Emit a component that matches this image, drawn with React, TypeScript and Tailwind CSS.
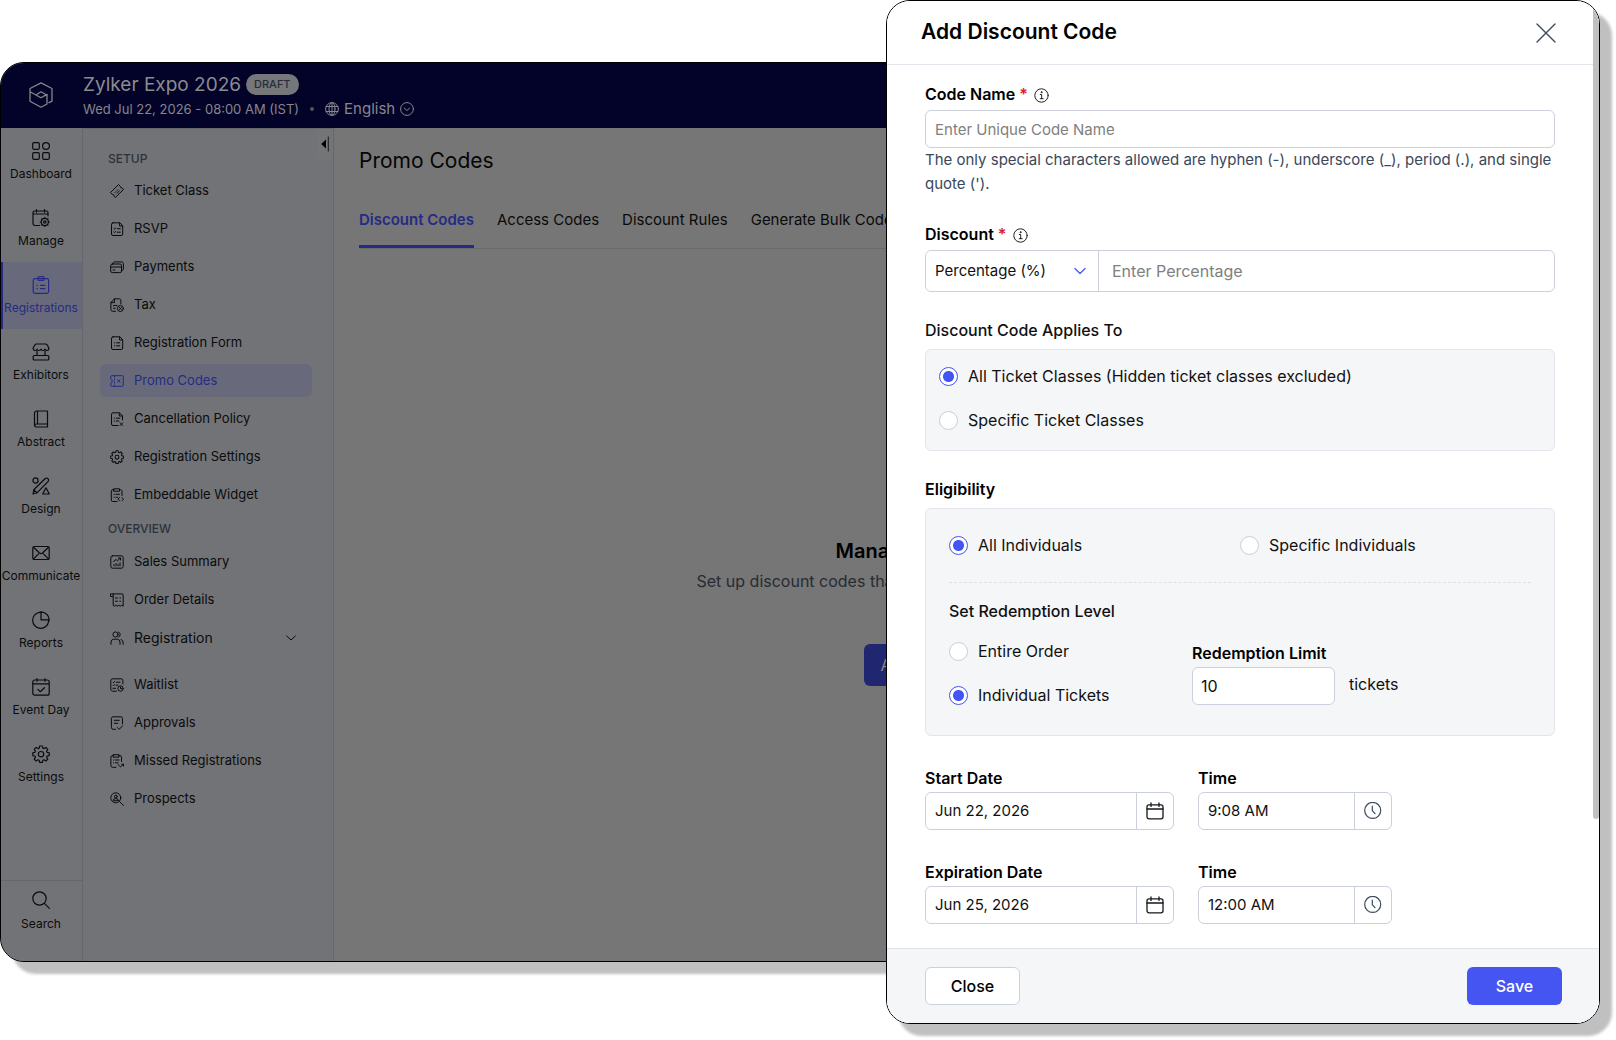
import React, { useState } from "react";

type IconProps = { className?: string; children: React.ReactNode; box?: number; width?: number };

function Svg({ className, children, box = 18, width = 1.2 }: IconProps) {
  return (
    <svg
      className={className}
      viewBox={`0 0 ${box} ${box}`}
      fill="none"
      stroke="currentColor"
      strokeWidth={width}
      strokeLinecap="round"
      strokeLinejoin="round"
      aria-hidden="true"
    >
      {children}
    </svg>
  );
}

const gear =
  "M7.6 1h2.8l.4 2.1 1.3.5 1.8-1.2 1.9 1.9-1.2 1.8.5 1.3 2.1.4v2.8l-2.1.4-.5 1.3 1.2 1.8-1.9 1.9-1.8-1.2-1.3.5-.4 2.1H7.6l-.4-2.1-1.3-.5-1.8 1.2-1.9-1.9 1.2-1.8-.5-1.3L.8 10.600V7.800l2.1-.4.5-1.3-1.200-1.8 1.9-1.900 1.8 1.2 1.300-.5z";

const railItems = [
  {
    label: "Dashboard",
    icon: (
      <>
        <rect x="0.7" y="0.7" width="6.6" height="6.6" rx="1.2" />
        <circle cx="14" cy="4" r="3.400" />
        <rect x="0.7" y="10.7" width="6.6" height="6.6" rx="1.2" />
        <rect x="10.7" y="10.7" width="6.6" height="6.6" rx="1.2" />
      </>
    ),
  },
  {
    label: "Manage",
    icon: (
      <>
        <path d="M7.500 16.500H3a2 2 0 0 1-2-2V3.500a1.500 1.500 0 0 1 1.500-1.500h12A1.500 1.500 0 0 1 16 3.500V7M1 5h15M4.500.7v2.500M12.500.7v2.500" />
        <circle cx="12.800" cy="13" r="3.600" />
        <circle cx="12.800" cy="13" r="1.200" />
        <path d="M12.800 8.400v1M12.800 16.600v1M8.200 13h1M16.400 13h1M9.600 9.800l.7.7M15.300 15.500l.7.7M9.600 16.200l.7-.7M15.300 10.500l.7-.7" />
      </>
    ),
  },
  {
    label: "Registrations",
    icon: (
      <>
        <rect x="1.200" y="2.600" width="15.400" height="14.700" rx="1.800" />
        <path d="M6 1.800Q6 .7 7 .7h4q1 0 1 1.100v1.600q0 1-1 1H7q-1 0-1-1z" />
        <path d="M8.500 9.300h4.500M8.500 12.700h4.500M5 9.300h.3M5 12.700h.3" />
      </>
    ),
  },
  {
    label: "Exhibitors",
    icon: (
      <>
        <path d="M4 1h10q1.500.5 3 4.500-.2 2-2 2t-2-1.300q-.3 1.300-2 1.300t-2-1.300q-.3 1.300-2 1.300t-2-1.300q-.3 1.300-2 1.300t-2-2Q2.500 1.500 4 1z" />
        <path d="M5 8v4M13 8v4" />
        <rect x="1.200" y="12.500" width="15.600" height="4.500" rx="1" />
      </>
    ),
  },
  {
    label: "Abstract",
    icon: (
      <>
        <path d="M4.500 1h11v13h-11a2 2 0 0 0-2 1.500V3a2 2 0 0 1 2-2zM5.500 1v13M2.500 15.500q.5 1.500 2 1.500h11v-3" />
      </>
    ),
  },
  {
    label: "Design",
    icon: (
      <>
        <circle cx="3.500" cy="3.500" r="2.600" />
        <path d="M1 17l.8-4.200L13.200 1.500q1.500-1 2.700.1t.3 2.700L5 15.800zM14 10.800l3.300 6.200h-6.600zM1.800 12.800l3.200 3" />
      </>
    ),
  },
  {
    label: "Communicate",
    icon: (
      <>
        <rect x="0.8" y="2.500" width="16.400" height="13" rx="1.600" />
        <path d="M1.500 3.300l6 5.700q1.500 1.200 3 0l6-5.700M1.500 14.800l5-5M16.500 14.800l-5-5" />
      </>
    ),
  },
  {
    label: "Reports",
    icon: (
      <>
        <path d="M7.600 1.400A8 8 0 1 0 16.600 10.400" />
        <path d="M9 .8v8h8.200Q16.700 1.800 9 .8z" />
        <path d="M7.600 1.400L9 1.200M16.600 10.400l.4-1.600" />
      </>
    ),
  },
  {
    label: "Event Day",
    icon: (
      <>
        <rect x="0.800" y="2" width="16.400" height="15.200" rx="2" />
        <path d="M1 5.800h16M5 .7v2.600M13 .7v2.600M6 11.500l2.200 2.200 4.300-4" />
      </>
    ),
  },
  {
    label: "Settings",
    icon: (
      <>
        <path d={gear} />
        <circle cx="9" cy="9.200" r="2.700" />
      </>
    ),
  },
];

const doc = "M3 .8h7l2.700 3v8.200a1.500 1.500 0 0 1-1.500 1.500H3A1.500 1.500 0 0 1 1.500 12V2.300A1.500 1.500 0 0 1 3 .8zM9.600 1v3h3";
const docLines = "M4.500 6.800h.3M6.700 6.800h3M4.500 9.800h.3M6.700 9.800h3";

const setupItems = [
  {
    label: "Ticket Class",
    icon: (
      <path d="M8.800.8l1.500 1.500q0 1.800 1.800 1.800l1.500 1.300L5.400 13.500 4 12.200q.2-2-1.800-1.900L.7 8.900zM5 8.500l.8-.8M7 6.500l.8-.8M7 9.300l2.500-2.500" />
    ),
  },
  {
    label: "RSVP",
    icon: (
      <>
        <path d={doc} />
        <path d="M3.800 6.500l.7.7 1-1.300M7.300 6.700h3M3.800 10l.7.7 1-1.300M7.300 10.200h3" />
      </>
    ),
  },
  {
    label: "Payments",
    icon: (
      <>
        <rect x=".7" y="4" width="10.800" height="8.600" rx="1.600" />
        <path d="M.8 7h10.600M3 10h1.800M2.800 3.800q.1-1.800 1.800-1.900h7.200q1.600.2 1.600 1.700v5.500q-.1 1.400-1.700 1.500" />
      </>
    ),
  },
  {
    label: "Tax",
    icon: (
      <>
        <path d="M5.500 13.300H2.600Q.9 13.200.9 11.600V4.500L4.400.8h5q1.500.1 1.500 1.500V6M1 4.600h3.400V1M3.500 7.500H7M3.500 10.200h1.700" />
        <circle cx="10.400" cy="10.500" r="3" />
        <path d="M9.400 9.500l2 2M11.400 9.500l-2 2" />
      </>
    ),
  },
  {
    label: "Registration Form",
    icon: (
      <>
        <path d={doc} />
        <path d={docLines} />
      </>
    ),
  },
  {
    label: "Promo Codes",
    icon: (
      <>
        <path d="M.8 2.500q0-.8.8-.8h10.800q.9.100.9.900v8.800q0 .9-.9.900H1.600q-.8 0-.8-.8V9.200q1.500-.5 1.500-2.200T.8 4.800zM4.500 2v1.200M4.500 5v1.200M4.500 8v1.200M4.500 11v1" />
        <path d="M7.500 5.700l2.600 2.600M10.100 5.700L7.500 8.300" />
      </>
    ),
  },
  {
    label: "Cancellation Policy",
    icon: (
      <>
        <path d="M8 13.500H3A1.500 1.500 0 0 1 1.500 12V2.300A1.500 1.500 0 0 1 3 .8h6.500l3 3V8M9.300 1v3h3M4.200 6.200h.3M6.300 6.200h3.500M4.200 9h.3M6.300 9h2.500M10.200 10.800l2.500 2.700M12.700 10.800l-2.500 2.700" />
      </>
    ),
  },
  {
    label: "Registration Settings",
    icon: (
      <>
        <g transform="scale(.78)">
          <path d={gear} strokeWidth="1.300" />
          <circle cx="9" cy="9.200" r="2.500" strokeWidth="1.300" />
        </g>
      </>
    ),
  },
  {
    label: "Embeddable Widget",
    icon: (
      <>
        <path d="M7 13.500H2.700Q1.300 13.400 1.300 12V3.200q.1-1.400 1.500-1.500H4M9.500 1.700h1q1.400.1 1.500 1.500V7.500M4 .8h5.500v2.400H4zM4 6.300h.3M6 6.300h3.500M4 9.300h.3M6 9.300h1.500M9.500 9.500L8 11.200l1.500 1.600M12 9.500l1.500 1.700L12 12.800" />
      </>
    ),
  },
];

const overviewTop = [
  {
    label: "Sales Summary",
    icon: (
      <>
        <rect x=".8" y=".8" width="12.400" height="12.400" rx="1.800" />
        <path d="M3.500 6.500L6 4.500l1.500 1.300 2.700-2.600M8.500 3h2v2M4 9.500v1.300M6 8.700v2.100M8 9.200v1.600M10 8v2.800" />
      </>
    ),
  },
  {
    label: "Order Details",
    icon: (
      <path d="M.8.9h11.400q1 .2 1 1.200v11.100l-1.500-1-1.500 1-1.500-1-1.500 1-1.500-1-1.500 1-1-.8V3.500H.8zM3.200 3.500V1M5.500 5h2M9.800 5h.8M5.500 8.200h2M9.800 8.200h.8" />
    ),
  },
];

const overviewBottom = [
  {
    label: "Waitlist",
    icon: (
      <>
        <path d="M6.500 13.200H2.800Q.9 13.100.8 11.500v-9Q1 .9 2.600.8h8.600q1.600.1 1.700 1.700V6M3 4.200l.6.6.9-1.200M6.300 4.200h3.700M3 7.200l.6.6.9-1.200M6.300 7.200h1.500M3 10.300h2.500" />
        <circle cx="10.500" cy="10.500" r="2.700" />
        <path d="M10.500 9v1.600h1.200" />
      </>
    ),
  },
  {
    label: "Approvals",
    icon: (
      <path d="M5.500 13.300H3.200Q1.500 13.200 1.400 11.600V2.400Q1.500.9 3.100.8h7.800q1.500.1 1.600 1.600V8M4.300 4.300h5M4.300 7.300h3.500M7.500 11.700l1.700 1.600 3.400-3.500" />
    ),
  },
  {
    label: "Missed Registrations",
    icon: (
      <path d="M6 13.300H2.500Q1 13.200.9 11.800V3.100Q1 1.700 2.400 1.600H3.500M9 1.600h1q1.400.1 1.500 1.500V7.500M3.500.7H9v2.400H3.500zM3.500 6h.3M5.500 6h3.500M3.500 8.800h.3M5.500 8.800H8M8 10.500l2.400 2.300 3-2.500M13.500 12v-1.700h-1.700" />
    ),
  },
  {
    label: "Prospects",
    icon: (
      <>
        <circle cx="5.800" cy="5.800" r="5" />
        <circle cx="5.800" cy="4.500" r="1.400" />
        <path d="M3.200 8.300q0-1.800 2.600-1.800t2.600 1.800zM9.500 9.500l4 4" />
      </>
    ),
  },
];

function MenuItem({ label, icon }: { label: string; icon: React.ReactNode }) {
  const active = label === "Promo Codes";
  return (
    <a
      href="#"
      className={`flex h-[33px] items-center gap-2.5 rounded-md pl-[10px] text-[13px] ${
        active ? "bg-[#686a7c] text-[#252a85]" : "text-[#0a0b0d]"
      }`}
    >
      <Svg className="size-3.5 shrink-0" box={14} width={1}>
        {icon}
      </Svg>
      {label}
    </a>
  );
}

function InfoIcon() {
  return (
    <Svg className="mt-1 size-[15px] text-[#222]" box={15} width={1}>
      <circle cx="7.500" cy="7.500" r="6.700" />
      <path d="M6.300 6.500h1.400v4M6.200 10.700h3" />
      <circle cx="7.500" cy="4.200" r=".5" fill="currentColor" />
    </Svg>
  );
}

function Radio(props: { name: string; label: string; on: boolean; onPick: () => void }) {
  return (
    <label className="flex h-5 items-center gap-2.5 text-base text-[#111]">
      <input
        type="radio"
        name={props.name}
        checked={props.on}
        onChange={props.onPick}
        className="size-[19px] shrink-0 appearance-none rounded-full border border-[#c9ced8] bg-white checked:border-[#4353f4] checked:bg-[radial-gradient(circle,#4353f4_0_5px,white_6px)]"
      />
      {props.label}
    </label>
  );
}

function DateField(props: { id: string; label: string; value: string; clock?: boolean }) {
  const [value, setValue] = useState(props.value);
  return (
    <div className={props.clock ? "w-[194px]" : "w-[249px]"}>
      <label htmlFor={props.id} className="block text-base leading-7 font-semibold text-black">
        {props.label}
      </label>
      <div className="flex h-[38px] rounded-md border border-[#cbd0da] bg-white">
        <input
          id={props.id}
          value={value}
          onChange={(e) => setValue(e.target.value)}
          className="min-w-0 flex-1 rounded-l-md px-[9px] text-[15px] text-[#111] outline-none"
        />
        <button
          type="button"
          aria-label={props.clock ? "Pick a time" : "Pick a date"}
          className="flex w-[37px] items-center justify-center border-l border-[#cbd0da]"
        >
          {props.clock ? (
            <Svg className="size-[18px] text-[#3c4a5c]">
              <circle cx="8.700" cy="8.400" r="8" />
              <path d="M8.300 4.200v4.500l2.700 3" />
            </Svg>
          ) : (
            <Svg className="size-[18px] text-[#15181d]" width={1.3}>
              <rect x="1" y="2.800" width="16" height="14" rx="2" />
              <path d="M1 7h16M5 1v3.400M13 1v3.400" />
            </Svg>
          )}
        </button>
      </div>
    </div>
  );
}

function EventWindow() {
  return (
    <div className="mr-[54px] flex flex-1 flex-col overflow-hidden rounded-3xl border border-black bg-[#767676] shadow-[12px_12px_3px_#c0c0c0]">
      <header className="flex h-[65px] shrink-0 items-center bg-[#030329] text-[#86868c]">
        <div className="flex w-20 shrink-0 justify-center pb-0.5">
          <Svg className="size-[26px]" box={26} width={1.3}>
            <path d="M21 20.700l3-1.500V6.500L13 .8 2 6.500v12.700l11 6 6-3.200v-9.600l-6 3.300-11-6M9 12.300l4-2.500 4.300 2.500" />
          </Svg>
        </div>
        <div className="ml-0.5 pt-0.5">
          <div className="flex items-center gap-[5px]">
            <h1 className="text-[19px] leading-6 text-[#8b8b90]">Zylker Expo 2026</h1>
            <span className="rounded-full bg-[#76777a] px-2 text-[11px] leading-[21px] font-medium text-[#282c36]">DRAFT</span>
          </div>
          <div className="flex items-center text-[13px] leading-6">
            <span>Wed Jul 22, 2026 - 08:00 AM (IST)</span>
            <span className="mx-[11px] size-1 rounded-full bg-[#55555c]" />
            <button type="button" className="flex items-center gap-[5px] text-[15px]">
              <Svg className="size-3.5" box={14} width={1}>
                <circle cx="7" cy="7" r="6.400" />
                <ellipse cx="7" cy="7" rx="3" ry="6.400" />
                <path d="M7 .6v12.800M1.200 4.500h11.600M1.200 9.500h11.600" />
              </Svg>
              English
              <Svg className="size-3.5" box={14} width={1}>
                <circle cx="7" cy="7" r="6.400" />
                <path d="M4.300 6l2.700 2.500L9.700 6" />
              </Svg>
            </button>
          </div>
        </div>
      </header>
      <div className="flex flex-1">
        <nav className="flex w-[82px] shrink-0 flex-col border-r border-[#66676a] bg-[#727376] text-xs text-[#0a0b0d]">
          {railItems.map((item) => (
            <a
              key={item.label}
              href="#"
              className={`flex h-[67px] flex-col items-center border-l-2 pt-3.5 pr-[3px] whitespace-nowrap ${
                item.label === "Registrations"
                  ? "border-[#252a85] bg-[#686a7c] text-[#252a85]"
                  : "border-transparent"
              }`}
            >
              <Svg className="size-[18px] shrink-0">{item.icon}</Svg>
              <span className="mt-1.5 leading-4">{item.label}</span>
            </a>
          ))}
          <a href="#" className="mt-auto flex h-[81px] flex-col items-center border-t border-[#66676a] pt-2.5 pr-px">
            <Svg className="size-[18px]">
              <circle cx="7.500" cy="7.500" r="6.700" />
              <path d="M12.400 12.400l5 5" />
            </Svg>
            <span className="mt-[7px] leading-4">Search</span>
          </a>
        </nav>
        <nav className="flex w-[251px] shrink-0 flex-col border-t border-r border-[#66676a] bg-[#727376] pr-[21px] pl-[17px]">
          <div className="relative flex h-[45px] items-end pb-[7px] pl-2">
            <h2 className="text-xs font-medium text-[#2c323c]">SETUP</h2>
            <button
              type="button"
              aria-label="Collapse menu"
              className="absolute top-0 -right-[21px] flex h-[30px] w-4 items-center justify-center bg-[#747577]"
            >
              <svg className="h-4 w-2" viewBox="0 0 8 16" aria-hidden="true">
                <path d="M5 3.500v9L.2 8z" fill="#000" />
                <path d="M7.300.5v15" stroke="#1c1c1c" />
              </svg>
            </button>
          </div>
          <div className="flex flex-col gap-[5px]">
            {setupItems.map((item) => (
              <MenuItem key={item.label} {...item} />
            ))}
          </div>
          <h2 className="mt-2.5 mb-2 pl-2 text-xs font-medium text-[#2c323c]">OVERVIEW</h2>
          <div className="flex flex-col gap-[5px]">
            {overviewTop.map((item) => (
              <MenuItem key={item.label} {...item} />
            ))}
            <button type="button" className="flex h-[33px] items-center gap-2.5 pl-[10px] text-sm text-[#0a0b0d]">
              <Svg className="size-3.5 shrink-0" box={14} width={1}>
                <circle cx="5.500" cy="3.500" r="2.600" />
                <path d="M8.500 1.100a2.600 2.600 0 0 1 0 4.900M1 13.300V11q.2-2.700 2.700-2.800h3.600Q9.800 8.300 10 11v2.300M11 8.500q2 .5 2.100 2.700v2.100" />
              </Svg>
              Registration
              <Svg className="mr-4 ml-auto size-2.5" box={10} width={1}>
                <path d="M.7 3l4.300 4 4.300-4" />
              </Svg>
            </button>
          </div>
          <div className="mt-[14px] flex flex-col gap-[5px]">
            {overviewBottom.map((item) => (
              <MenuItem key={item.label} {...item} />
            ))}
          </div>
        </nav>
        <main className="min-w-0 flex-1 pt-[18px] pl-[25px]">
          <h2 className="text-[21px] leading-[30px] text-[#050505]">Promo Codes</h2>
          <div className="mt-[33px] flex gap-[23px] border-b border-[#6b6b6b] text-[15px] text-[#0a0a0a]">
            <button type="button" className="rounded-t-sm border-b-[3px] border-[#252a85] pb-[13px] font-semibold text-[#252a85]">
              Discount Codes
            </button>
            <button type="button" className="pb-4">Access Codes</button>
            <button type="button" className="pb-4">Discount Rules</button>
            <button type="button" className="pb-4">Generate Bulk Codes</button>
          </div>
          <div className="mt-[286px] flex flex-col items-center pr-[25px]">
            <h3 className="w-[224px] text-xl leading-8 font-semibold text-black">Manage</h3>
            <p className="w-[502px] text-base leading-7 text-[#262b33]">Set up discount codes that</p>
            <button
              type="button"
              className="mt-[49px] h-[42px] w-[168px] rounded-md bg-[#20266f] pl-[17px] text-left text-base text-[#8b8b90]"
            >
              Add
            </button>
          </div>
        </main>
      </div>
    </div>
  );
}

function DiscountDialog() {
  const [code, setCode] = useState("");
  const [amount, setAmount] = useState("");
  const [limit, setLimit] = useState("10");
  const [classes, setClasses] = useState("all");
  const [people, setPeople] = useState("all");
  const [level, setLevel] = useState("tickets");

  return (
    <section
      role="dialog"
      aria-labelledby="dialog-title"
      className="absolute top-0 right-4 w-[714px] rounded-3xl border border-black shadow-[12px_12px_3px_#c0c0c0]"
    >
      <div className="relative flex flex-col overflow-hidden rounded-[23px] bg-white">
        <div className="absolute top-0 right-0 h-[818px] w-1.5 rounded-b bg-[#c0c0c0]" />
        <header className="mr-1.5 flex h-16 items-center justify-between border-b border-[#e4e6ed] pr-[37px] pl-[34px]">
          <h2 id="dialog-title" className="pb-0.5 text-[21px] font-semibold text-black">
            Add Discount Code
          </h2>
          <button type="button" aria-label="Close dialog">
            <Svg className="size-5 text-[#3c4a5c]" box={20} width={1.4}>
              <path d="M1 1l18 18M19 1L1 19" />
            </Svg>
          </button>
        </header>

        <form className="flex flex-col pt-3.5 pr-[44px] pb-6 pl-[38px]">
          <div className="flex h-[31px] items-center gap-1.5 pb-0.5">
            <label htmlFor="code-name" className="text-base font-semibold text-black">
              Code Name <span className="text-[#d9212c]">*</span>
            </label>
            <InfoIcon />
          </div>
          <input
            id="code-name"
            value={code}
            onChange={(e) => setCode(e.target.value)}
            placeholder="Enter Unique Code Name"
            className="h-[38px] rounded-md border border-[#cbd0da] px-[9px] text-[15px] text-[#111] outline-none placeholder:text-[#808080]"
          />
          <p className="text-[15px] leading-6 text-[#3b475a]">
            The only special characters allowed are hyphen (-), underscore (_), period (.), and single quote (').
          </p>

          <div className="mt-[23px] flex h-[31px] items-center gap-1.5 pb-0.5">
            <label htmlFor="discount" className="text-base font-semibold text-black">
              Discount <span className="text-[#d9212c]">*</span>
            </label>
            <InfoIcon />
          </div>
          <div className="flex h-[42px] rounded-md border border-[#cbd0da]">
            <div className="relative w-[173px] border-r border-[#cbd0da]">
              <select
                aria-label="Discount type"
                className="size-full appearance-none rounded-l-md bg-white pl-[9px] text-[15px] text-[#111] outline-none"
              >
                <option>Percentage (%)</option>
                <option>Amount</option>
              </select>
              <Svg className="pointer-events-none absolute top-3.5 right-3 size-3 text-[#4353f4]" box={12} width={1.2}>
                <path d="M1 3.500l5 5 5-5" />
              </Svg>
            </div>
            <input
              id="discount"
              value={amount}
              onChange={(e) => setAmount(e.target.value)}
              placeholder="Enter Percentage"
              className="min-w-0 flex-1 rounded-r-md px-[13px] text-base text-[#111] outline-none placeholder:text-[#808080]"
            />
          </div>

          <h3 className="mt-5 pb-px text-base leading-9 font-medium text-[#111]">Discount Code Applies To</h3>
          <div className="flex flex-col gap-6 rounded-md border border-[#e3e5ea] bg-[#f5f6f8] px-[13px] pt-4 pb-5">
            <Radio
              name="classes"
              label="All Ticket Classes (Hidden ticket classes excluded)"
              on={classes === "all"}
              onPick={() => setClasses("all")}
            />
            <Radio
              name="classes"
              label="Specific Ticket Classes"
              on={classes === "specific"}
              onPick={() => setClasses("specific")}
            />
          </div>

          <h3 className="mt-5 pb-px text-base leading-9 font-semibold text-black">Eligibility</h3>
          <div className="rounded-md border border-[#e3e5ea] bg-[#f5f6f8] px-[23px] pt-[26px] pb-[30px]">
            <div className="grid grid-cols-2 border-b border-dashed border-[#dfe1e7] pb-[27px]">
              <Radio name="people" label="All Individuals" on={people === "all"} onPick={() => setPeople("all")} />
              <Radio
                name="people"
                label="Specific Individuals"
                on={people === "specific"}
                onPick={() => setPeople("specific")}
              />
            </div>
            <h4 className="mt-4 text-base font-medium text-[#111]">Set Redemption Level</h4>
            <div className="mt-4 flex">
              <div className="flex w-[243px] flex-col gap-6 pt-0.5">
                <Radio name="level" label="Entire Order" on={level === "order"} onPick={() => setLevel("order")} />
                <Radio
                  name="level"
                  label="Individual Tickets"
                  on={level === "tickets"}
                  onPick={() => setLevel("tickets")}
                />
              </div>
              <div>
                <label htmlFor="limit" className="block text-base leading-7 font-semibold text-black">
                  Redemption Limit
                </label>
                <div className="flex items-center gap-3.5">
                  <input
                    id="limit"
                    value={limit}
                    onChange={(e) => setLimit(e.target.value)}
                    className="h-[38px] w-[143px] rounded-md border border-[#cbd0da] bg-white px-2 text-base text-[#111] outline-none"
                  />
                  <span className="pb-1 text-base text-[#111]">tickets</span>
                </div>
              </div>
            </div>
          </div>

          <div className="mt-7 flex gap-6">
            <DateField id="start-date" label="Start Date" value="Jun 22, 2026" />
            <DateField id="start-time" label="Time" value="9:08 AM" clock />
          </div>
          <div className="mt-7 flex gap-6">
            <DateField id="end-date" label="Expiration Date" value="Jun 25, 2026" />
            <DateField id="end-time" label="Time" value="12:00 AM" clock />
          </div>
        </form>

        <footer className="flex justify-between border-t border-[#dfe1e7] bg-[#f5f6f8] py-[18px] pr-[37px] pl-[38px] text-base font-medium">
          <button type="button" className="h-[38px] w-[95px] rounded-md border border-[#cbd0da] bg-white text-black">
            Close
          </button>
          <button type="button" className="h-[38px] w-[95px] rounded-md bg-[#4455f2] text-white">
            Save
          </button>
        </footer>
      </div>
    </section>
  );
}

export default function App() {
  return (
    <div className="relative flex min-h-screen bg-white pt-[62px] pb-[78px] font-['Inter',sans-serif]">
      <EventWindow />
      <DiscountDialog />
    </div>
  );
}
